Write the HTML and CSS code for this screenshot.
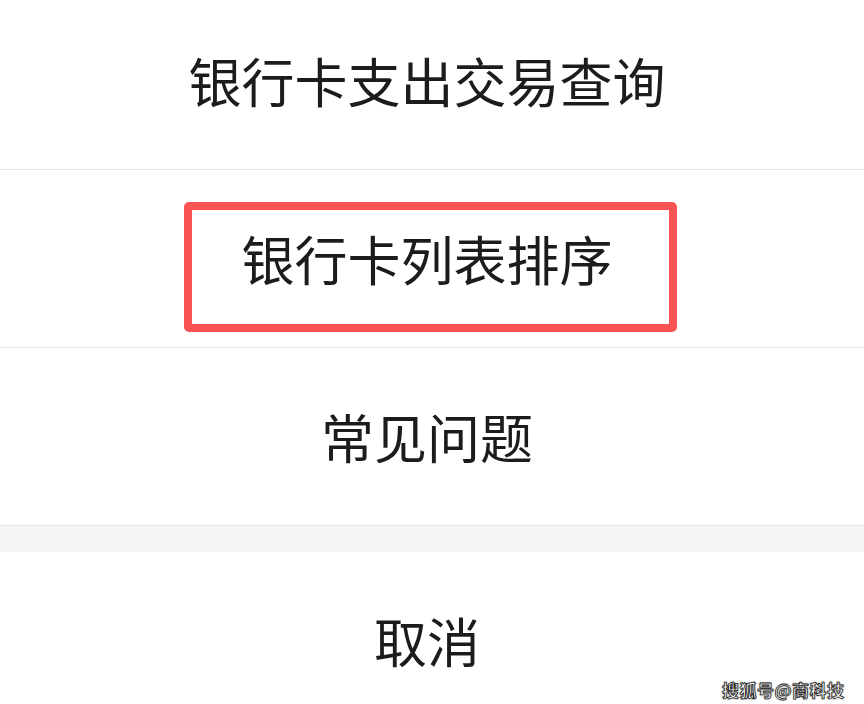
FILE: index.html
```html
<!DOCTYPE html>
<html lang="zh-CN">
<head>
<meta charset="utf-8">
<link rel="stylesheet" href="styles.css">
</head>
<body>
<div class="sheet">
  <div class="item item-first">银行卡支出交易查询</div>
  <div class="item item-marked">银行卡列表排序<span class="mark"></span></div>
  <div class="item">常见问题</div>
  <div class="gap"></div>
  <div class="item item-cancel">取消</div>
  <div class="watermark">搜狐号@商科技</div>
</div>
</body>
</html>
```

FILE: styles.css
```css
html, body {
  margin: 0;
  padding: 0;
  background: #ffffff;
}
.sheet {
  position: relative;
  width: 864px;
  height: 704px;
  overflow: hidden;
  font-family: "Noto Sans CJK SC", "Noto Sans", sans-serif;
  color: #1c1c1c;
}
.item {
  position: relative;
  height: 177px;
  display: flex;
  align-items: center;
  justify-content: center;
  padding-right: 10px;
  font-size: 53px;
  line-height: 1;
  border-bottom: 1px solid #e6e6e6;
  box-sizing: content-box;
}
.item-first {
  height: 160px;
  padding-bottom: 9px;
}
.item-cancel {
  border-bottom: none;
}
.gap {
  height: 26px;
  background: #f5f5f5;
}
.mark {
  position: absolute;
  left: 184px;
  top: 32px;
  width: 493px;
  height: 130px;
  box-sizing: border-box;
  border: 8px solid #fa5353;
  border-radius: 5px;
}
.watermark {
  position: absolute;
  left: 722px;
  top: 680px;
  font-size: 17px;
  font-weight: 700;
  line-height: 20px;
  letter-spacing: 0.5px;
  color: #ffffff;
  -webkit-text-stroke: 0.8px #222;
  text-shadow: 0 0 2px rgba(0,0,0,0.7);
}
```
